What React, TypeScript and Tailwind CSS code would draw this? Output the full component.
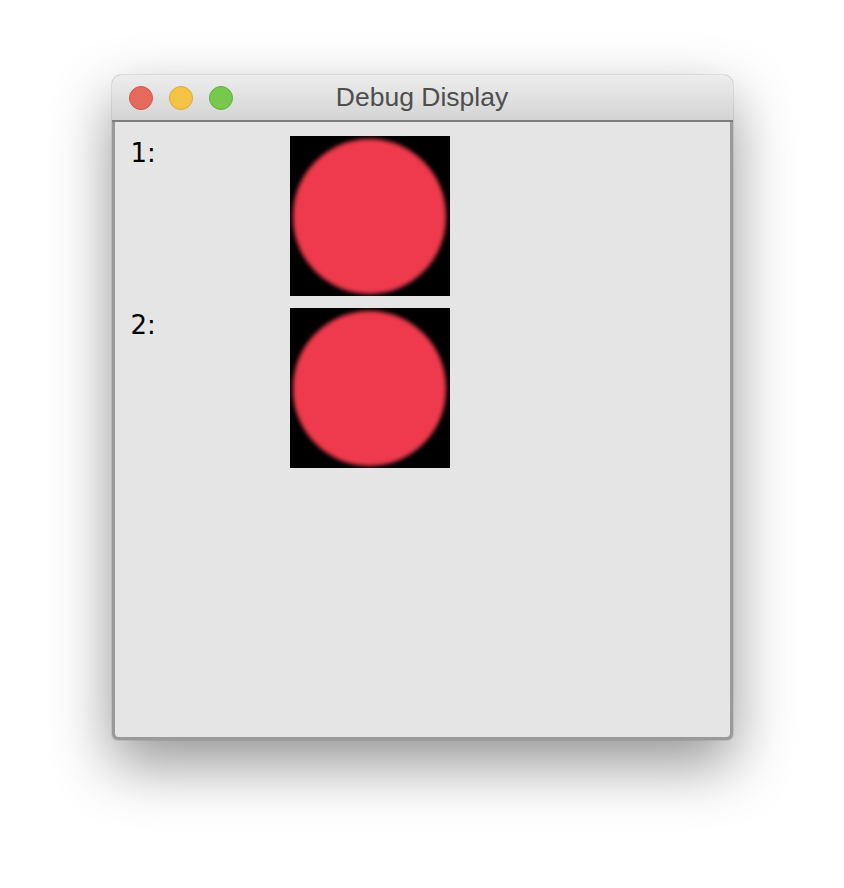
export default function App() {
  const rows = ["1:", "2:"];
  return (
    <div className="min-h-[888px] w-[844px] bg-white flex justify-center pt-[75px]" style={{ fontFamily: '"Liberation Sans", Arial, sans-serif' }}>
      <div className="w-[621px] h-[665px] flex flex-col rounded-t-[9px] rounded-b-[6px] bg-[#9a9a9a] shadow-[0_24px_60px_rgba(0,0,0,0.42),0_0_0_1px_rgba(0,0,0,0.08)]">
        {/* title bar */}
        <div className="relative h-[47px] shrink-0 rounded-t-[9px] bg-gradient-to-b from-[#ededed] to-[#d4d4d4] border-b-2 border-[#7f7f7f] flex items-center">
          <div className="flex items-center gap-[16px] pl-[17px] pt-[1px]">
            <span className="w-[24px] h-[24px] rounded-full bg-[#e66a5c] border border-[#d0584a]" />
            <span className="w-[24px] h-[24px] rounded-full bg-[#f4c343] border border-[#dba93a]" />
            <span className="w-[24px] h-[24px] rounded-full bg-[#76c94d] border border-[#62b03d]" />
          </div>
          <div className="absolute inset-0 flex items-center justify-center pt-[1px] text-[26.5px] text-[#4e4e4e]">
            Debug Display
          </div>
        </div>
        {/* content */}
        <div className="flex-1 mx-[3px] mb-[3px] rounded-b-[4px] bg-[#e5e5e5] pt-[14px] flex flex-col gap-[12px]">
          {rows.map((r) => (
            <div key={r} className="flex">
              <div className="w-[175px] pl-[16px] text-[26px] leading-[35px] text-black" style={{ fontFamily: '"DejaVu Sans", Verdana, sans-serif' }}>{r}</div>
              <div className="w-[160px] h-[160px] bg-black flex items-center justify-center overflow-hidden">
                <div className="w-[153px] h-[155px] rounded-full bg-[#ee3a4c] blur-[2px]" />
              </div>
            </div>
          ))}
        </div>
      </div>
    </div>
  );
}
